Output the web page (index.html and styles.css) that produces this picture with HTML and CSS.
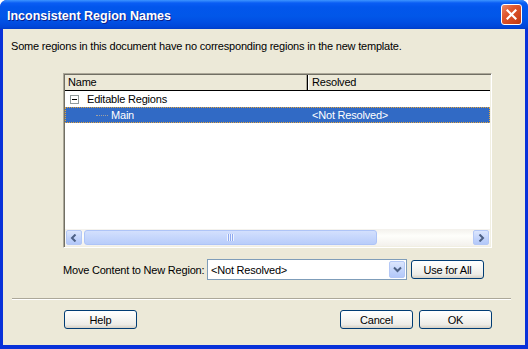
FILE: index.html
```html
<!DOCTYPE html>
<html lang="en">
<head>
    <meta charset="UTF-8">
    <title>Inconsistent Region Names</title>
    <link rel="stylesheet" href="styles.css">
</head>
<body>
    <div class="window">
        <div class="titlebar">
            <span class="title">Inconsistent Region Names</span>
            <button class="close-button" title="Close">
                <svg width="11" height="11" viewBox="0 0 11 11">
                    <path d="M1.5 1.5 L9.5 9.5 M9.5 1.5 L1.5 9.5" stroke="#fff" stroke-width="2.2" stroke-linecap="square"/>
                </svg>
            </button>
        </div>

        <div class="client">
            <p class="intro">Some regions in this document have no corresponding regions in the new template.</p>

            <div class="listview">
                <div class="lv-header">
                    <div class="lv-col col-name">Name</div>
                    <div class="lv-col col-resolved">Resolved</div>
                </div>
                <div class="lv-body">
                    <div class="lv-row">
                        <div class="lv-cell col-name">
                            <span class="expander"></span>
                            <span>Editable Regions</span>
                        </div>
                    </div>
                    <div class="lv-row selected">
                        <div class="lv-cell col-name child">
                            <span class="tree-line"></span>
                            <span>Main</span>
                        </div>
                        <div class="lv-cell col-resolved">&lt;Not Resolved&gt;</div>
                    </div>
                </div>
                <div class="hscroll">
                    <span class="sb-button">
                        <svg width="8" height="8" viewBox="0 0 8 8"><path d="M5.5 0.5 L2 4 L5.5 7.5" fill="none" stroke="#4d6185" stroke-width="2"/></svg>
                    </span>
                    <div class="sb-track">
                        <div class="sb-thumb"><span class="grip"></span></div>
                    </div>
                    <span class="sb-button">
                        <svg width="8" height="8" viewBox="0 0 8 8"><path d="M2.5 0.5 L6 4 L2.5 7.5" fill="none" stroke="#4d6185" stroke-width="2"/></svg>
                    </span>
                </div>
            </div>

            <div class="move-row">
                <label class="move-label">Move Content to New Region:</label>
                <div class="combo">
                    <span class="combo-value">&lt;Not Resolved&gt;</span>
                    <span class="combo-button">
                        <svg width="9" height="7" viewBox="0 0 9 7"><path d="M1 1.5 L4.5 5 L8 1.5" fill="none" stroke="#4d6185" stroke-width="2"/></svg>
                    </span>
                </div>
                <button class="btn">Use for All</button>
            </div>

            <div class="separator"></div>

            <div class="footer">
                <button class="btn">Help</button>
                <div class="spacer"></div>
                <button class="btn">Cancel</button>
                <button class="btn">OK</button>
            </div>
        </div>
    </div>
</body>
</html>
```

FILE: styles.css
```css
* {
    margin: 0;
    padding: 0;
    box-sizing: border-box;
}

body {
    font-family: 'Liberation Sans', Arial, sans-serif;
    font-size: 11px;
    letter-spacing: -0.2px;
    color: #000;
    background: #fff;
}

.window {
    width: 528px;
    height: 349px;
    display: flex;
    flex-direction: column;
    background: #0831d9;
    border-radius: 7px 7px 0 0;
    overflow: hidden;
}

/* title bar */
.titlebar {
    height: 29px;
    flex-shrink: 0;
    display: flex;
    align-items: center;
    padding: 2px 6px 0 7px;
    background: linear-gradient(to bottom, #3d95ff 0, #0a5df4 3px, #0256ec 7px, #0157e9 16px, #014fe3 22px, #0046d8 27px, #003cc9 29px);
}

.title {
    flex: 1;
    color: #fff;
    font-weight: bold;
    font-size: 12.5px;
    letter-spacing: 0;
    text-shadow: 1px 1px 0 #0a1e8a;
}

.close-button {
    width: 21px;
    height: 21px;
    margin-top: -2px;
    display: flex;
    align-items: center;
    justify-content: center;
    border: 1px solid #fff;
    border-radius: 3px;
    background: linear-gradient(135deg, #ea8a6a 0%, #e0582f 35%, #cc4219 80%, #b8380f 100%);
}

/* client area */
.client {
    flex: 1;
    margin: 0 3px 4px;
    background: #ece9d8;
    display: flex;
    flex-direction: column;
}

.intro {
    margin: 11px 0 0 8px;
    line-height: 13px;
}

/* list view */
.listview {
    margin: 20px 0 0 60px;
    width: 429px;
    height: 175px;
    display: flex;
    flex-direction: column;
    background: #fff;
    border: 1px solid;
    border-color: #aca899 #fff #fff #aca899;
    box-shadow: inset 1px 1px 0 #716f64, inset -1px -1px 0 #f1efe2;
    padding: 1px;
}

.lv-header {
    display: flex;
    height: 16px;
    flex-shrink: 0;
    background: #ece9d8;
    border-bottom: 1px solid #000;
}

.lv-col {
    line-height: 15px;
    padding-left: 3px;
}

.col-name {
    width: 243px;
    flex-shrink: 0;
}

.lv-header .col-name {
    border-right: 1px solid #000;
    box-shadow: inset -1px 0 0 #aca899;
}

.lv-header .col-resolved {
    flex: 1;
    border-left: 1px solid #fff;
}

.lv-body {
    flex: 1;
}

.lv-row {
    display: flex;
    height: 16px;
    line-height: 14px;
}

.lv-cell {
    padding-left: 3px;
    display: flex;
    align-items: center;
}

.lv-row .col-resolved {
    padding-left: 3px;
}

.lv-row.selected {
    background: #316ac5;
    color: #fff;
    border: 1px dotted #e3a53c;
}

.expander {
    width: 9px;
    height: 9px;
    margin: 0 8px 0 2px;
    border: 1px solid #919b9c;
    background: linear-gradient(#000, #000) center / 5px 1px no-repeat, #fff;
}

.child {
    padding-left: 30px;
}

.tree-line {
    width: 12px;
    height: 1px;
    margin-right: 3px;
    border-top: 1px dotted #a0a0a0;
}

/* horizontal scrollbar */
.hscroll {
    height: 17px;
    flex-shrink: 0;
    display: flex;
    align-items: center;
    padding: 0 1px;
    background: linear-gradient(to bottom, #f3f1ec, #fefefb 40%, #f3f1ec);
}

.sb-button {
    width: 16px;
    height: 15px;
    display: flex;
    align-items: center;
    justify-content: center;
    border: 1px solid #b4c8f6;
    border-radius: 2px;
    background: linear-gradient(to bottom, #dce6fd, #c1d3fb 60%, #b3c8f9);
}

.sb-track {
    flex: 1;
    height: 15px;
    padding-left: 2px;
}

.sb-thumb {
    width: 293px;
    height: 15px;
    display: flex;
    align-items: center;
    justify-content: center;
    border: 1px solid #aec4f7;
    border-radius: 3px;
    background: linear-gradient(to bottom, #d3e0fd, #c5d6fc 50%, #b9cdfa);
}

.grip {
    width: 7px;
    height: 7px;
    background: repeating-linear-gradient(to right, #eef3fe 0, #eef3fe 1px, #8faaf0 1px, #8faaf0 2px);
}

/* move content row */
.move-row {
    display: flex;
    align-items: center;
    margin: 11px 0 0 60px;
    height: 21px;
}

.move-label {
    width: 144px;
}

.combo {
    width: 200px;
    height: 21px;
    display: flex;
    align-items: center;
    padding: 1px;
    background: #fff;
    border: 1px solid #7f9db9;
}

.combo-value {
    flex: 1;
    padding-left: 2px;
}

.combo-button {
    width: 16px;
    height: 17px;
    display: flex;
    align-items: center;
    justify-content: center;
    border: 1px solid #b4c8f6;
    border-radius: 2px;
    background: linear-gradient(to bottom, #dce6fd, #c1d3fb 60%, #b3c8f9);
}

.move-row .btn {
    margin-left: 4px;
}

/* buttons */
.btn {
    width: 73px;
    height: 19px;
    font-family: inherit;
    font-size: 11px;
    letter-spacing: -0.2px;
    color: #000;
    border: 1px solid #003c74;
    border-radius: 3px;
    background: linear-gradient(to bottom, #fff 0%, #f7f7f4 40%, #ecebe6 80%, #d6d0c5 100%);
}

.separator {
    margin: 18px 0 0 9px;
    width: 499px;
    border-top: 1px solid #aca899;
    border-bottom: 1px solid #fff;
}

.footer {
    display: flex;
    gap: 6px;
    margin-top: 10px;
    padding: 0 33px 0 61px;
}

.spacer {
    flex: 1;
}
```
